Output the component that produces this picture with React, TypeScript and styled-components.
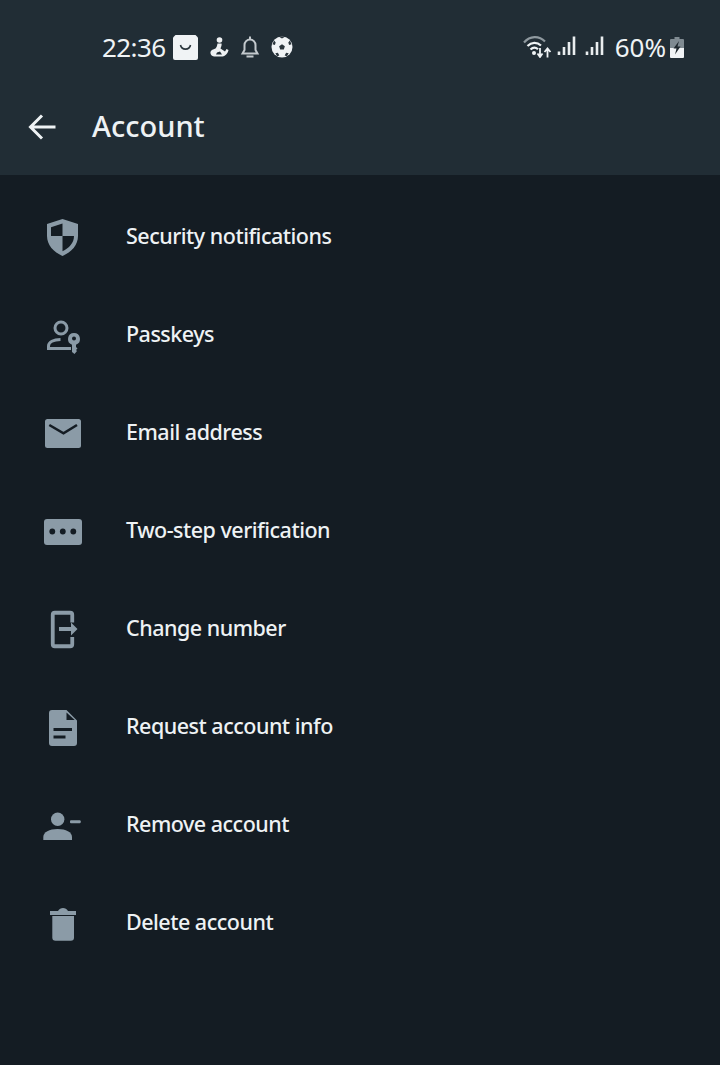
import React from 'react'
import styled, { createGlobalStyle } from 'styled-components'

const BG = '#141c23'

const GlobalStyle = createGlobalStyle`
    html, body {
        margin: 0;
        padding: 0;
        background: ${BG};
    }
`

const Screen = styled.div`
    width: 720px;
    height: 1065px;
    overflow: hidden;
    background: ${BG};
    font-family: "Noto Sans", "Open Sans", sans-serif;
    color: #eef2f4;
`

const Header = styled.header`
    height: 175px;
    background: #212d35;
    display: flex;
    flex-direction: column;
`

const StatusBar = styled.div`
    height: 94px;
    display: flex;
    align-items: center;
    justify-content: space-between;
    padding: 0 36px 0 102px;
`

const StatusGroup = styled.div`
    display: flex;
    align-items: center;
    gap: ${({ $gap }: { $gap: number }) => $gap}px;
`

const StatusText = styled.span`
    font-size: 26px;
    line-height: 30px;
    letter-spacing: ${({ $tracking }: { $tracking: number }) => $tracking}px;
    margin-left: ${({ $shift }: { $tracking: number; $shift?: number }) => $shift ?? 0}px;
    color: #eff3f5;
`

const StatusIcon = styled.svg`
    display: block;
    flex: none;
    margin-left: ${({ $shift }: { $shift?: number }) => $shift ?? 0}px;
`

const TitleBar = styled.div`
    height: 66px;
    display: flex;
    align-items: center;
    padding-left: 28px;
    gap: 35px;
`

const BackIcon = styled.svg`
    display: block;
    width: 29px;
    height: 28px;
`

const Title = styled.h1`
    margin: 0 0 2px;
    font-size: 29px;
    line-height: 36px;
    font-weight: 500;
    color: #eef2f4;
`

const List = styled.ul`
    list-style: none;
    margin: 0;
    padding: 12px 0 0;
`

const Row = styled.li`
    height: 98px;
    display: flex;
    align-items: center;
    padding-left: 33px;
`

const IconBox = styled.div`
    width: 60px;
    height: 60px;
    margin-right: 33px;
    display: flex;
    align-items: center;
    justify-content: center;
    color: #8b9ba7;
`

const RowIcon = styled.svg`
    display: block;
    width: 44px;
    height: 44px;
`

const RowLabel = styled.span`
    font-size: 21.5px;
    line-height: 28px;
    font-weight: 500;
    color: #eef2f4;
    letter-spacing: -0.5px;
    margin-top: -1px;
`

const icons: Record<string, React.ReactNode> = {
    shield: (
        <path
            fillRule="evenodd"
            d="M21.500 5 37 10v12c0 9-6.500 16-15.500 20C12.500 38 6 31 6 22V10Zm0 4.500L10 13.300V22h11.500Zm0 12.500v15.200C28 34.200 33 29 33 22Z"
            fill="currentColor"
        />
    ),
    passkey: (
        <>
            <circle cx="20" cy="16" r="6" fill="none" stroke="currentColor" strokeWidth="3" />
            <path d="M30 36.500H7.500V34c0-4 5-6.500 12-6.500" fill="none" stroke="currentColor" strokeWidth="3" />
            <path
                fillRule="evenodd"
                d="M33 21a6 6 0 0 1 2 11.650V35l1.500 1.500-1.500 1.500 1 1-2.500 3-2.500-2v-7.350A6 6 0 0 1 33 21Zm0 3.500a2 2 0 1 0 0 4 2 2 0 0 0 0-4Z"
                fill="currentColor"
            />
        </>
    ),
    mail: (
        <>
            <rect x="4" y="9" width="36" height="29" rx="2.500" fill="currentColor" />
            <path d="M8.300 15 22.500 23.300 36 15" fill="none" stroke={BG} strokeWidth="2.600" />
        </>
    ),
    dots: (
        <>
            <rect x="3" y="11" width="38" height="26" rx="3" fill="currentColor" />
            <circle cx="11.300" cy="23.500" r="2.900" fill={BG} />
            <circle cx="21.800" cy="23.500" r="2.900" fill={BG} />
            <circle cx="32.300" cy="23.500" r="2.900" fill={BG} />
        </>
    ),
    phone: (
        <>
            <path
                d="M31.250 16.500V8.750a2 2 0 0 0-2-2H13.750a2 2 0 0 0-2 2v29.500a2 2 0 0 0 2 2h15.500a2 2 0 0 0 2-2V31"
                fill="none"
                stroke="currentColor"
                strokeWidth="3.800"
            />
            <path d="M18 21h12v-4.500l6.500 6.500-6.500 6.500V25H18Z" fill="currentColor" />
        </>
    ),
    file: (
        <>
            <path
                fillRule="evenodd"
                d="M11 6h14.500L36 16.500V39a3 3 0 0 1-3 3H11a3 3 0 0 1-3-3V9a3 3 0 0 1 3-3Zm1.500 18v3h18.500v-3Zm0 7.500v3h12v-3Z"
                fill="currentColor"
            />
            <path d="M25.500 8.500v7.500h8.200Z" fill={BG} />
        </>
    ),
    removeUser: (
        <>
            <circle cx="16.700" cy="17.300" r="6.700" fill="currentColor" />
            <path d="M2.300 38v-3c0-5 6-8 14.300-8S31 30 31 35v3Z" fill="currentColor" />
            <rect x="29" y="18.200" width="10.700" height="3" rx="1" fill="currentColor" />
        </>
    ),
    trash: (
        <>
            <path d="M9 11h26v4H9Z M17 11c1-2 3-3 5-3s4 1 5 3Z" fill="currentColor" />
            <path d="M11.300 16h21.700v21.500a3.200 3.200 0 0 1-3.200 3.200H14.500a3.200 3.200 0 0 1-3.200-3.200Z" fill="currentColor" />
        </>
    ),
}

const rows = [
    { icon: 'shield', label: 'Security notifications' },
    { icon: 'passkey', label: 'Passkeys' },
    { icon: 'mail', label: 'Email address' },
    { icon: 'dots', label: 'Two-step verification' },
    { icon: 'phone', label: 'Change number' },
    { icon: 'file', label: 'Request account info' },
    { icon: 'removeUser', label: 'Remove account' },
    { icon: 'trash', label: 'Delete account' },
]

const SignalBars = ({ shift }: { shift?: number }) => (
    <StatusIcon $shift={shift} width="19" height="22" viewBox="0 0 19 22">
        <path d="M2 15.500V19M7 11v8M12 6v13M17 .5V19" stroke="#e9edef" strokeWidth="2.600" fill="none" />
    </StatusIcon>
)

export default function App() {
    return (
        <Screen>
            <GlobalStyle />
            <Header>
                <StatusBar>
                    <StatusGroup $gap={8}>
                        <StatusText $tracking={-0.6}>22:36</StatusText>
                        <StatusIcon width="25" height="25" viewBox="0 0 25 25">
                            <path d="M2.500 0h20l2.500 2.500V23a2 2 0 0 1-2 2H2a2 2 0 0 1-2-2V2.500Z" fill="#f0f3f5" />
                            <path d="M7.500 10c1 5.500 9 5.500 10 0" fill="none" stroke="#2a353c" strokeWidth="1.600" />
                        </StatusIcon>
                        <StatusIcon $shift={4} width="19" height="20" viewBox="0 0 19 20">
                            <circle cx="9.500" cy="3" r="2.800" fill="#eef1f3" />
                            <path
                                fillRule="evenodd"
                                d="M7.500 6.500h4c.5 2-.5 3.500-1 5l4.500 3 1.500-2.500 2 1c-.5 3-3 6-6 6.500H4c-3 0-4.500-3.500-3-5.500 1-1.500 3-1.500 4.500-2.500 1.500-1.500 1.500-3 2-5Zm-.5 9-1 2h6l-2-3Z"
                                fill="#eef1f3"
                            />
                        </StatusIcon>
                        <StatusIcon $shift={2} width="22" height="24" viewBox="0 0 22 24">
                            <path
                                d="M11 1.500v2.500M3.500 18.500 5.500 15V10a5.500 5.500 0 0 1 11 0v5l2 3.500ZM7.500 21.500h7"
                                fill="none"
                                stroke="#c3c9cd"
                                strokeWidth="2"
                            />
                        </StatusIcon>
                        <StatusIcon $shift={2} width="22" height="22" viewBox="0 0 23 23">
                            <circle cx="11.500" cy="11.500" r="11" fill="#f0f3f5" />
                            <path
                                d="m11.500 8.500 3 2.200-1.100 3.500H9.600l-1.100-3.500ZM8.800 1l2.700 1.600L14.200 1l-1-.6h-3.400ZM1.500 8.500l2.600.8.800-2.600-1.600-2ZM21.500 8.500l-2.600.8-.8-2.600 1.600-2ZM4.500 18l2.700-.4 1.500 2.800-2.300.8ZM18.500 18l-2.700-.4-1.500 2.800 2.300.8Z"
                                fill="#2a353c"
                            />
                        </StatusIcon>
                    </StatusGroup>
                    <StatusGroup $gap={8}>
                        <StatusIcon width="29" height="22" viewBox="0 0 29 22">
                            <path d="M1 6.500C7-.5 16-.5 22 5.500" fill="none" stroke="#8f999f" strokeWidth="2.200" />
                            <path
                                d="M4.500 10C8.500 6 14 6 18 9.500M7.500 13.500c2.500-2.500 5-2.500 7.500-.2"
                                fill="none"
                                stroke="#eff3f5"
                                strokeWidth="2.200"
                            />
                            <circle cx="11" cy="17" r="2" fill="#eff3f5" />
                            <path
                                d="M17 12v8.500M14.500 17.500l2.500 3.500 2.500-3.500M24.500 21.500V13M21.500 16l3-3.500 3 3.500"
                                fill="none"
                                stroke="#eff3f5"
                                strokeWidth="1.800"
                            />
                        </StatusIcon>
                        <SignalBars shift={-3} />
                        <SignalBars shift={1} />
                        <StatusText $tracking={0} $shift={3}>60%</StatusText>
                        <StatusIcon $shift={-4} width="14" height="21" viewBox="0 0 14 21">
                            <path d="M4.500 0h5v2H13a1 1 0 0 1 1 1v8H0V3a1 1 0 0 1 1-1h3.500Z" fill="#7f8a91" />
                            <path d="M0 11h14v9a1 1 0 0 1-1 1H1a1 1 0 0 1-1-1Z" fill="#f0f3f5" />
                            <path d="M9 4 3.500 11.500h3l-1.500 6 5.500-8h-3Z" fill="#20292f" />
                        </StatusIcon>
                    </StatusGroup>
                </StatusBar>
                <TitleBar>
                    <BackIcon viewBox="0 0 29 28">
                        <path d="M27.500 14H3M14 2.500 2.500 14 14 25.500" fill="none" stroke="#eef2f4" strokeWidth="3" />
                    </BackIcon>
                    <Title>Account</Title>
                </TitleBar>
            </Header>
            <List>
                {rows.map((row) => (
                    <Row key={row.label}>
                        <IconBox>
                            <RowIcon viewBox="0 0 44 44">{icons[row.icon]}</RowIcon>
                        </IconBox>
                        <RowLabel>{row.label}</RowLabel>
                    </Row>
                ))}
            </List>
        </Screen>
    )
}
